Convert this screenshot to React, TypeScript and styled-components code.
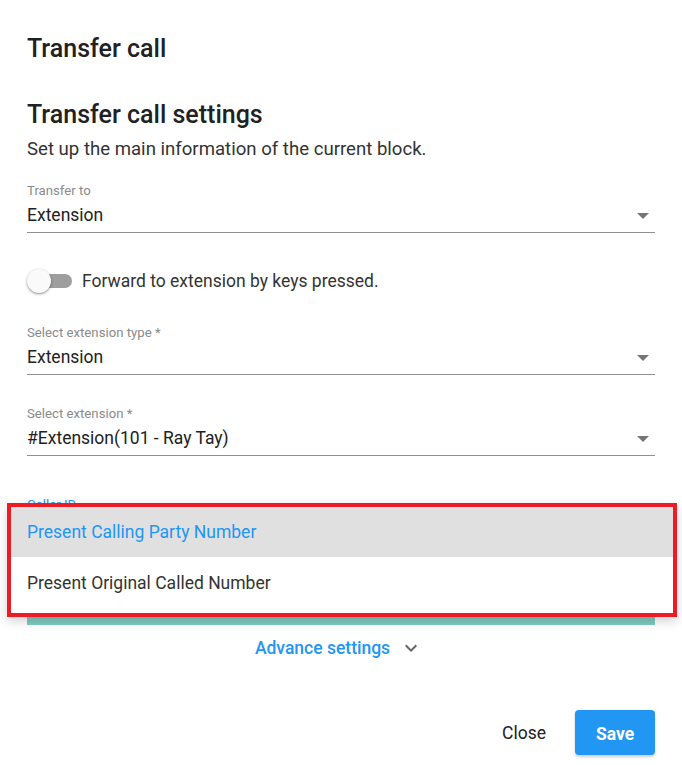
import React from "react";
import styled, { createGlobalStyle } from "styled-components";

const Global = createGlobalStyle`
  html, body { margin: 0; padding: 0; background: #fff; }
  body { font-family: Roboto, "Liberation Sans", Arial, sans-serif; color: #212121; }
  * { box-sizing: border-box; }
`;

const Dialog = styled.div`
  position: relative;
  width: 682px;
  height: 765px;
  padding: 0 27px;
  display: flex;
  flex-direction: column;
`;

const Title = styled.h1`
  margin: 34px 0 0;
  font-size: 25px;
  line-height: 29px;
  font-weight: 500;
  color: #212121;
`;

const SectionTitle = styled.h2`
  margin: 37px 0 0;
  font-size: 25px;
  line-height: 29px;
  font-weight: 500;
  color: #212121;
`;

const Subtitle = styled.p`
  margin: 9px 0 0;
  font-size: 18.6px;
  line-height: 22px;
  color: #333;
`;

const Field = styled.div<{ $top: number }>`
  margin-top: ${(p) => p.$top}px;
  display: flex;
  flex-direction: column;
`;

const Label = styled.label<{ $active?: boolean }>`
  font-size: 13.2px;
  line-height: 16px;
  color: ${(p) => (p.$active ? "#2196f3" : "#8a8a8a")};
`;

const SelectRow = styled.div`
  display: flex;
  align-items: center;
  justify-content: space-between;
  padding: 5px 6px 5px 0;
  line-height: 23px;
  border-bottom: 1px solid #8f8f8f;
  font-size: 17.5px;
  color: #212121;
`;

const ToggleRow = styled.div`
  margin-top: 35px;
  display: flex;
  align-items: center;
  height: 26px;
  gap: 9px;
  font-size: 17.5px;
  color: #333;
`;

const Switch = styled.span`
  position: relative;
  display: inline-block;
  width: 46px;
  height: 26px;
  flex: none;
`;

const Track = styled.span`
  position: absolute;
  left: 9px;
  top: 6px;
  width: 36px;
  height: 14px;
  border-radius: 7px;
  background: #9e9e9e;
`;

const Thumb = styled.span`
  position: absolute;
  left: 0;
  top: 1px;
  width: 24px;
  height: 24px;
  border-radius: 50%;
  background: #fafafa;
  box-shadow: 0 1px 3px rgba(0, 0, 0, 0.35), 0 1px 1px rgba(0, 0, 0, 0.14);
`;

const TealBlock = styled.div`
  margin-top: 14px;
  height: 64px;
  background: #7fcbc1;
`;

const AdvanceRow = styled.div`
  margin-top: 11px;
  display: flex;
  justify-content: center;
  align-items: center;
  gap: 9px;
  padding-right: 4px;
  font-size: 17.5px;
  font-weight: 500;
  color: #2196f3;
  height: 24px;
`;

const Footer = styled.div`
  margin-top: 50px;
  display: flex;
  justify-content: flex-end;
  align-items: center;
  gap: 13px;
`;

const TextButton = styled.button`
  border: none;
  background: transparent;
  font-family: inherit;
  font-size: 17.5px;
  color: #212121;
  padding: 8px 16px;
`;

const PrimaryButton = styled.button`
  width: 80px;
  height: 45px;
  border: none;
  border-radius: 4px;
  background: #2196f3;
  color: #fff;
  font-family: inherit;
  font-size: 17.5px;
  font-weight: 700;
  padding-top: 3px;
  box-shadow: 0 2px 3px rgba(0, 0, 0, 0.2);
`;

const Menu = styled.div`
  position: absolute;
  left: 7px;
  top: 503px;
  width: 670px;
  height: 114px;
  border: 4px solid #ed1c24;
  background: #fff;
  box-shadow: 0 4px 10px rgba(0, 0, 0, 0.18);
  display: flex;
  flex-direction: column;
  padding-bottom: 3px;
`;

const MenuItem = styled.div<{ $selected?: boolean }>`
  height: ${(p) => (p.$selected ? 50 : 51)}px;
  display: flex;
  align-items: center;
  padding-left: 16px;
  font-size: 17.5px;
  background: ${(p) => (p.$selected ? "#e0e0e0" : "#fff")};
  color: ${(p) => (p.$selected ? "#2196f3" : "#333")};
`;

const ArrowDrop = () => (
  <svg width="12" height="6" viewBox="0 0 12 6">
    <path d="M0 0h12L6 6z" fill="#757575" />
  </svg>
);

const Chevron = () => (
  <svg width="24" height="24" viewBox="0 0 24 24">
    <path d="M16.59 8.59 12 13.17 7.41 8.59 6 10l6 6 6-6z" fill="#666" />
  </svg>
);

const SelectField = ({ label, value, top, active }: { label: string; value: string; top: number; active?: boolean }) => (
  <Field $top={top}>
    <Label $active={active}>{label}</Label>
    <SelectRow>
      <span>{value}</span>
      <ArrowDrop />
    </SelectRow>
  </Field>
);

export default function App() {
  return (
    <>
      <Global />
      <Dialog>
        <Title>Transfer call</Title>
        <SectionTitle>Transfer call settings</SectionTitle>
        <Subtitle>Set up the main information of the current block.</Subtitle>
        <SelectField top={23} label="Transfer to" value="Extension" />
        <ToggleRow>
          <Switch>
            <Track />
            <Thumb />
          </Switch>
          <span>Forward to extension by keys pressed.</span>
        </ToggleRow>
        <SelectField top={31} label="Select extension type *" value="Extension" />
        <SelectField top={31} label="Select extension *" value="#Extension(101 - Ray Tay)" />
        <SelectField top={41} label="Caller ID" value="Present Calling Party Number" active />
        <TealBlock />
        <AdvanceRow>
          <span>Advance settings</span>
          <Chevron />
        </AdvanceRow>
        <Footer>
          <TextButton>Close</TextButton>
          <PrimaryButton>Save</PrimaryButton>
        </Footer>
        <Menu>
          <MenuItem $selected>Present Calling Party Number</MenuItem>
          <MenuItem>Present Original Called Number</MenuItem>
        </Menu>
      </Dialog>
    </>
  );
}
